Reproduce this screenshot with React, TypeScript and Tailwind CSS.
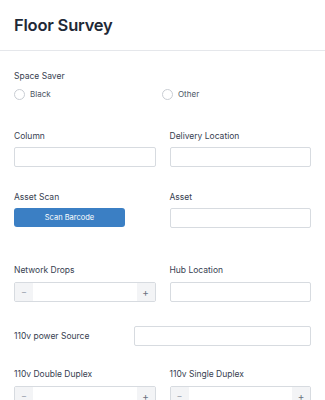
import React from "react";

const font = { fontFamily: "Inter, 'Noto Sans', sans-serif" };

function Label({ children }: { children: React.ReactNode }) {
  return <div className="text-[8.5px] leading-[12px] text-[#374151]">{children}</div>;
}

function TextInput() {
  return <div className="h-[20px] rounded-[2px] border border-[#d7dbe0] bg-white" />;
}

function Stepper() {
  return (
    <div className="flex h-[20px] rounded-[2px] border border-[#d7dbe0] bg-white overflow-hidden">
      <div className="w-[18px] bg-[#f3f4f6] flex items-center justify-center text-[9px] text-[#9ca3af]">−</div>
      <div className="flex-1" />
      <div className="w-[18px] bg-[#f3f4f6] flex items-center justify-center text-[10px] text-[#6b7280]">+</div>
    </div>
  );
}

function Radio({ label }: { label: string }) {
  return (
    <div className="flex items-center gap-[5px]">
      <div className="w-[11px] h-[11px] rounded-full border border-[#c9cdd3] bg-white" />
      <span className="text-[8px] text-[#4b5563]">{label}</span>
    </div>
  );
}

export default function App() {
  return (
    <div className="w-[325px] h-[400px] bg-white overflow-hidden" style={font}>
      {/* Header */}
      <div className="h-[51px] border-b border-[#e5e7eb] px-[14px] flex items-center">
        <h1 className="text-[16.5px] font-semibold text-[#1f2937] tracking-[-0.2px] mt-[1px]">Floor Survey</h1>
      </div>

      <div className="px-[14px]">
        {/* Space Saver */}
        <div className="mt-[19px]">
          <Label>Space Saver</Label>
          <div className="flex mt-[6px]">
            <div className="w-[148px]"><Radio label="Black" /></div>
            <Radio label="Other" />
          </div>
        </div>

        {/* Column / Delivery Location */}
        <div className="grid grid-cols-2 gap-x-[14px] mt-[30px]">
          <div>
            <Label>Column</Label>
            <div className="mt-[5px]"><TextInput /></div>
          </div>
          <div>
            <Label>Delivery Location</Label>
            <div className="mt-[5px]"><TextInput /></div>
          </div>
        </div>

        {/* Asset Scan / Asset */}
        <div className="grid grid-cols-2 gap-x-[14px] mt-[24px]">
          <div>
            <Label>Asset Scan</Label>
            <div className="mt-[5px] w-[111px] h-[19px] rounded-[3px] bg-[#3b7fc4] flex items-center justify-center text-[7.5px] text-white">
              Scan Barcode
            </div>
          </div>
          <div>
            <Label>Asset</Label>
            <div className="mt-[5px]"><TextInput /></div>
          </div>
        </div>

        {/* Network Drops / Hub Location */}
        <div className="grid grid-cols-2 gap-x-[14px] mt-[36px]">
          <div>
            <Label>Network Drops</Label>
            <div className="mt-[6px]"><Stepper /></div>
          </div>
          <div>
            <Label>Hub Location</Label>
            <div className="mt-[6px]"><TextInput /></div>
          </div>
        </div>

        {/* 110v power Source */}
        <div className="flex items-center mt-[24px]">
          <div className="w-[120px]"><Label>110v power Source</Label></div>
          <div className="flex-1"><TextInput /></div>
        </div>

        {/* Duplex steppers */}
        <div className="grid grid-cols-2 gap-x-[14px] mt-[22px]">
          <div>
            <Label>110v Double Duplex</Label>
            <div className="mt-[6px]"><Stepper /></div>
          </div>
          <div>
            <Label>110v Single Duplex</Label>
            <div className="mt-[6px]"><Stepper /></div>
          </div>
        </div>
      </div>
    </div>
  );
}
